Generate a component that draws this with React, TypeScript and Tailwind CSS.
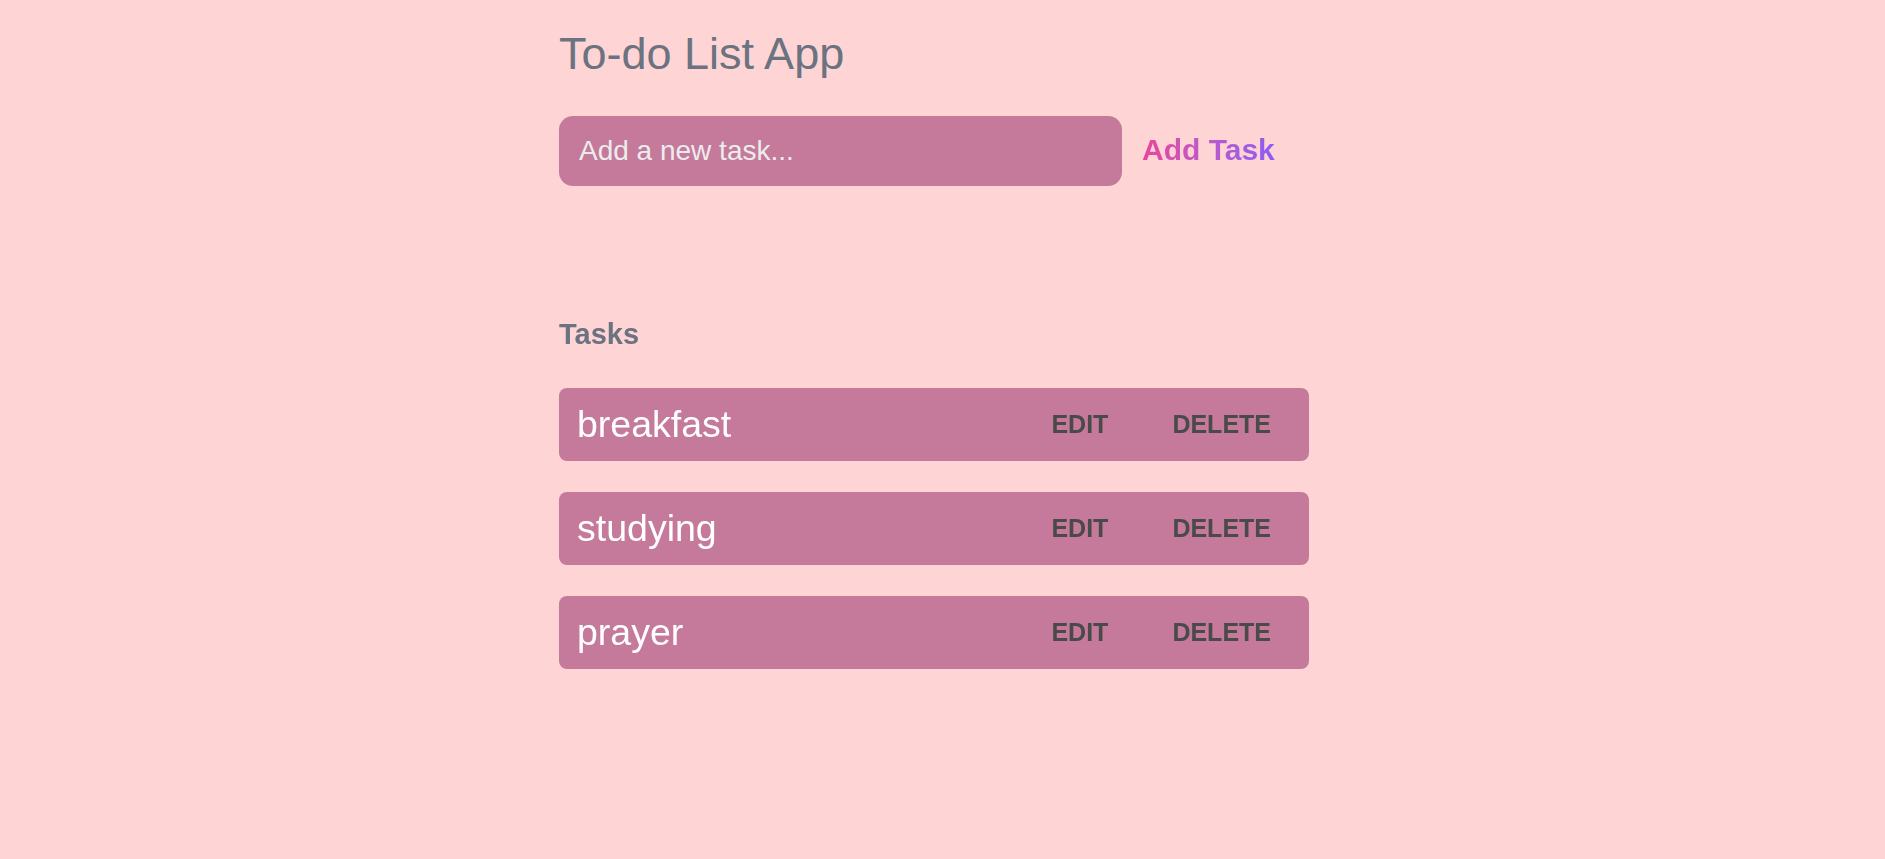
import { useState } from "react";

const font = { fontFamily: '"Liberation Sans", Arial, sans-serif' };

export default function App() {
  const [tasks] = useState(["breakfast", "studying", "prayer"]);

  return (
    <div className="min-h-[859px] w-full bg-[#fed4d5]" style={font}>
      <div className="mx-auto w-[767px] pt-[31px]">
        <h1 className="text-[45px] leading-none font-normal text-[#6b7280]">To-do List App</h1>

        <div className="mt-[40px] flex items-center gap-[20px]">
          <input
            autoFocus
            type="text"
            placeholder="Add a new task..."
            className="h-[70px] w-[563px] rounded-[14px] bg-[#c5799b] pl-[20px] text-[28px] text-white outline-none placeholder:text-[#ececec]"
          />
          <button className="mb-[3px] bg-linear-to-r from-[#e8449c] to-[#8b5cf6] bg-clip-text text-[30px] leading-none font-bold text-transparent">
            Add Task
          </button>
        </div>

        <h2 className="mt-[134px] text-[29px] leading-none font-bold text-[#6b7280]">Tasks</h2>

        <ul className="mt-[39px] flex flex-col gap-[31px]">
          {tasks.map((t) => (
            <li
              key={t}
              className="flex h-[73px] w-[750px] items-center rounded-lg bg-[#c5799b] pr-[22px] pl-[18px]"
            >
              <span className="flex-1 text-[37.5px] leading-none text-white">{t}</span>
              <div className="flex items-center gap-[32px]">
                <button className="px-[16px] text-[25px] leading-none font-bold text-[#4a4a4a]">EDIT</button>
                <button className="px-[16px] text-[25px] leading-none font-bold text-[#4a4a4a]">DELETE</button>
              </div>
            </li>
          ))}
        </ul>
      </div>
    </div>
  );
}
